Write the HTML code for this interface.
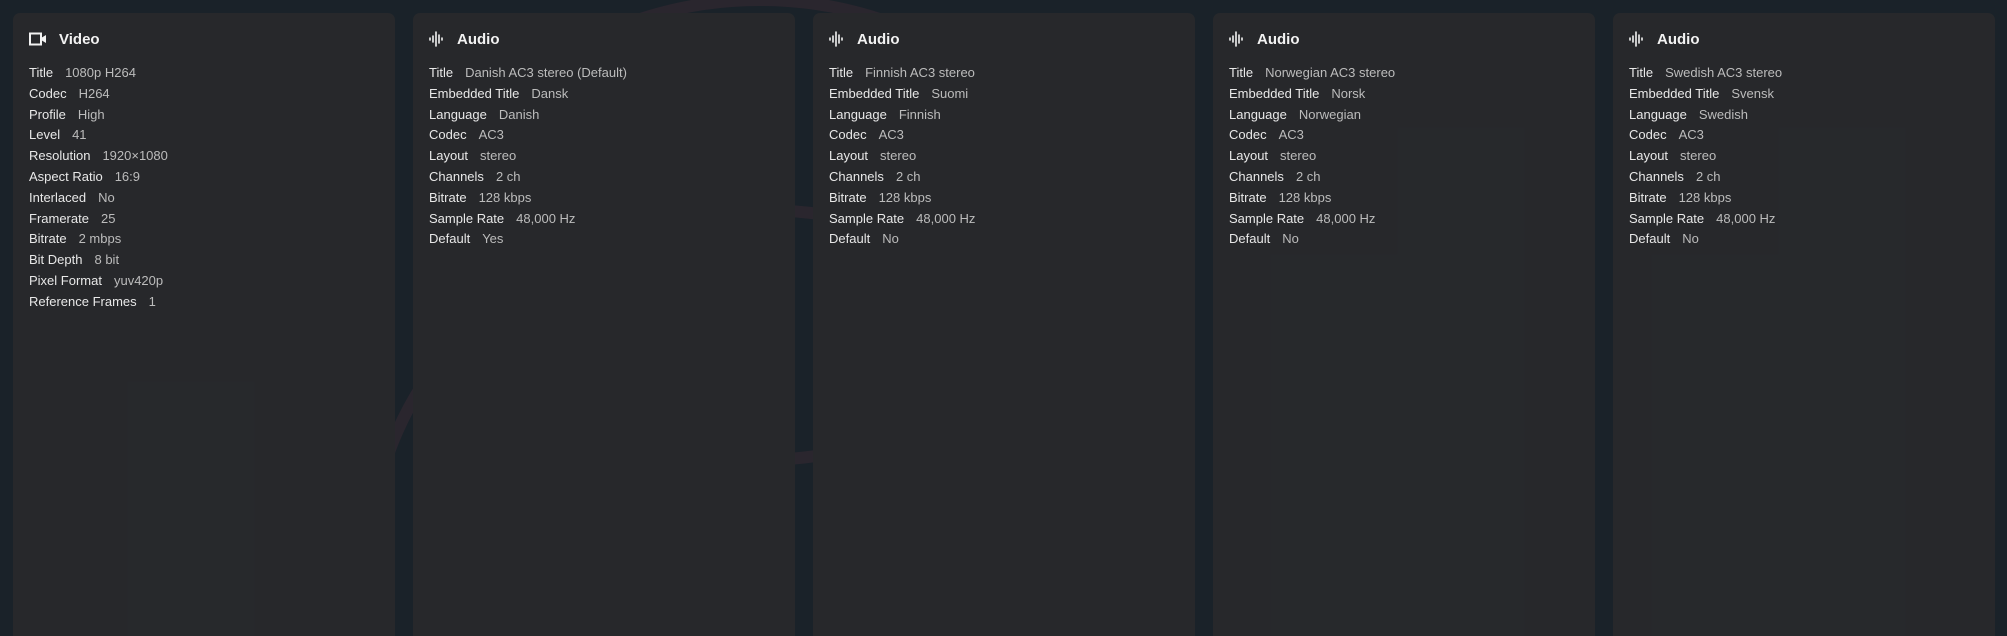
<!DOCTYPE html>
<html><head><meta charset="utf-8"><style>
html,body{margin:0;padding:0;width:2007px;height:636px;overflow:hidden;background:#1a2229;font-family:"Liberation Sans",sans-serif}
.bg{position:absolute;left:0;top:0}
.card{position:absolute;top:13px;width:382px;height:623px;background:rgba(40,41,44,0.96);border-radius:7px 7px 0 0}
.h{position:absolute;top:15px;left:16px;height:22px;display:flex;align-items:center;color:#f2f2f2;font-weight:bold;font-size:15px}
.h svg{margin-right:12px}
.rows{position:absolute;top:50px;left:16px;font-size:13px;line-height:20.8px;white-space:nowrap}
.l{color:#e8e8e8}.v{color:#bcbcbc;margin-left:12px}
</style></head><body>
<svg class="bg" width="2007" height="636">
<g fill="none" stroke="#3a2a33" stroke-width="12" opacity="0.5">
<ellipse cx="760" cy="230" rx="300" ry="230"/>
<ellipse cx="760" cy="560" rx="390" ry="350"/>
</g>
</svg>
<div class="card" style="left:13px"><div class="h"><svg width="18" height="14" viewBox="0 0 18 14"><rect x="1" y="1.5" width="11" height="11" fill="none" stroke="#f2f2f2" stroke-width="2"/><path d="M12 6l5-3v8l-5-3z" fill="#f2f2f2"/></svg>Video</div>
<div class="rows">
<div><span class="l">Title</span><span class="v">1080p H264</span></div>
<div><span class="l">Codec</span><span class="v">H264</span></div>
<div><span class="l">Profile</span><span class="v">High</span></div>
<div><span class="l">Level</span><span class="v">41</span></div>
<div><span class="l">Resolution</span><span class="v">1920×1080</span></div>
<div><span class="l">Aspect Ratio</span><span class="v">16:9</span></div>
<div><span class="l">Interlaced</span><span class="v">No</span></div>
<div><span class="l">Framerate</span><span class="v">25</span></div>
<div><span class="l">Bitrate</span><span class="v">2 mbps</span></div>
<div><span class="l">Bit Depth</span><span class="v">8 bit</span></div>
<div><span class="l">Pixel Format</span><span class="v">yuv420p</span></div>
<div><span class="l">Reference Frames</span><span class="v">1</span></div>
</div></div>

<div class="card" style="left:413px"><div class="h"><svg width="16" height="16" viewBox="0 0 16 16" stroke="#f2f2f2" stroke-width="1.6" stroke-linecap="round"><path d="M1 7v2M4 5v6M7 1v14M10 4v8M13 7v2"/></svg>Audio</div>
<div class="rows">
<div><span class="l">Title</span><span class="v">Danish AC3 stereo (Default)</span></div>
<div><span class="l">Embedded Title</span><span class="v">Dansk</span></div>
<div><span class="l">Language</span><span class="v">Danish</span></div>
<div><span class="l">Codec</span><span class="v">AC3</span></div>
<div><span class="l">Layout</span><span class="v">stereo</span></div>
<div><span class="l">Channels</span><span class="v">2 ch</span></div>
<div><span class="l">Bitrate</span><span class="v">128 kbps</span></div>
<div><span class="l">Sample Rate</span><span class="v">48,000 Hz</span></div>
<div><span class="l">Default</span><span class="v">Yes</span></div>
</div></div>

<div class="card" style="left:813px"><div class="h"><svg width="16" height="16" viewBox="0 0 16 16" stroke="#f2f2f2" stroke-width="1.6" stroke-linecap="round"><path d="M1 7v2M4 5v6M7 1v14M10 4v8M13 7v2"/></svg>Audio</div>
<div class="rows">
<div><span class="l">Title</span><span class="v">Finnish AC3 stereo</span></div>
<div><span class="l">Embedded Title</span><span class="v">Suomi</span></div>
<div><span class="l">Language</span><span class="v">Finnish</span></div>
<div><span class="l">Codec</span><span class="v">AC3</span></div>
<div><span class="l">Layout</span><span class="v">stereo</span></div>
<div><span class="l">Channels</span><span class="v">2 ch</span></div>
<div><span class="l">Bitrate</span><span class="v">128 kbps</span></div>
<div><span class="l">Sample Rate</span><span class="v">48,000 Hz</span></div>
<div><span class="l">Default</span><span class="v">No</span></div>
</div></div>

<div class="card" style="left:1213px"><div class="h"><svg width="16" height="16" viewBox="0 0 16 16" stroke="#f2f2f2" stroke-width="1.6" stroke-linecap="round"><path d="M1 7v2M4 5v6M7 1v14M10 4v8M13 7v2"/></svg>Audio</div>
<div class="rows">
<div><span class="l">Title</span><span class="v">Norwegian AC3 stereo</span></div>
<div><span class="l">Embedded Title</span><span class="v">Norsk</span></div>
<div><span class="l">Language</span><span class="v">Norwegian</span></div>
<div><span class="l">Codec</span><span class="v">AC3</span></div>
<div><span class="l">Layout</span><span class="v">stereo</span></div>
<div><span class="l">Channels</span><span class="v">2 ch</span></div>
<div><span class="l">Bitrate</span><span class="v">128 kbps</span></div>
<div><span class="l">Sample Rate</span><span class="v">48,000 Hz</span></div>
<div><span class="l">Default</span><span class="v">No</span></div>
</div></div>

<div class="card" style="left:1613px"><div class="h"><svg width="16" height="16" viewBox="0 0 16 16" stroke="#f2f2f2" stroke-width="1.6" stroke-linecap="round"><path d="M1 7v2M4 5v6M7 1v14M10 4v8M13 7v2"/></svg>Audio</div>
<div class="rows">
<div><span class="l">Title</span><span class="v">Swedish AC3 stereo</span></div>
<div><span class="l">Embedded Title</span><span class="v">Svensk</span></div>
<div><span class="l">Language</span><span class="v">Swedish</span></div>
<div><span class="l">Codec</span><span class="v">AC3</span></div>
<div><span class="l">Layout</span><span class="v">stereo</span></div>
<div><span class="l">Channels</span><span class="v">2 ch</span></div>
<div><span class="l">Bitrate</span><span class="v">128 kbps</span></div>
<div><span class="l">Sample Rate</span><span class="v">48,000 Hz</span></div>
<div><span class="l">Default</span><span class="v">No</span></div>
</div></div>
</body></html>
